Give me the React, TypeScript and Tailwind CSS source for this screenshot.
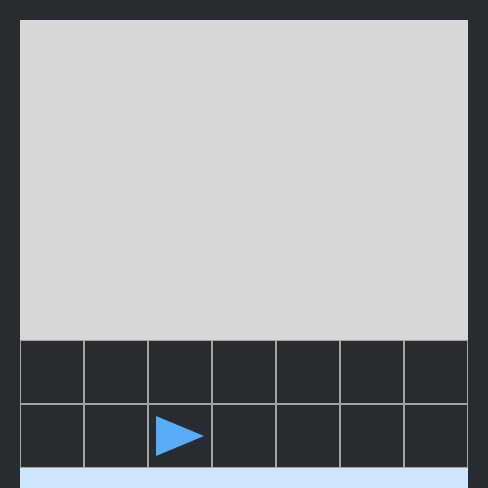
const cols = 7;

function Cell({ play }: { play?: boolean }) {
  return (
    <div className="relative h-16 w-16 border border-[#a2a2a2]">
      {play && (
        <svg className="absolute -left-px -top-px" width="64" height="64" viewBox="0 0 64 64">
          <polygon points="8,12 8,52 56,32" fill="#5aabf6" />
        </svg>
      )}
    </div>
  );
}

export default function App() {
  return (
    <div className="h-[488px] w-[488px] overflow-hidden bg-[#282c31] px-5 pt-5">
      <div className="h-[320px] w-[448px] bg-[#d8d8d8]" />
      {[0, 1].map((row) => (
        <div key={row} className="flex">
          {Array.from({ length: cols }).map((_, i) => (
            <Cell key={i} play={row === 1 && i === 2} />
          ))}
        </div>
      ))}
      <div className="-mt-px h-16 w-[448px] bg-[#cde6fd]" />
    </div>
  );
}
